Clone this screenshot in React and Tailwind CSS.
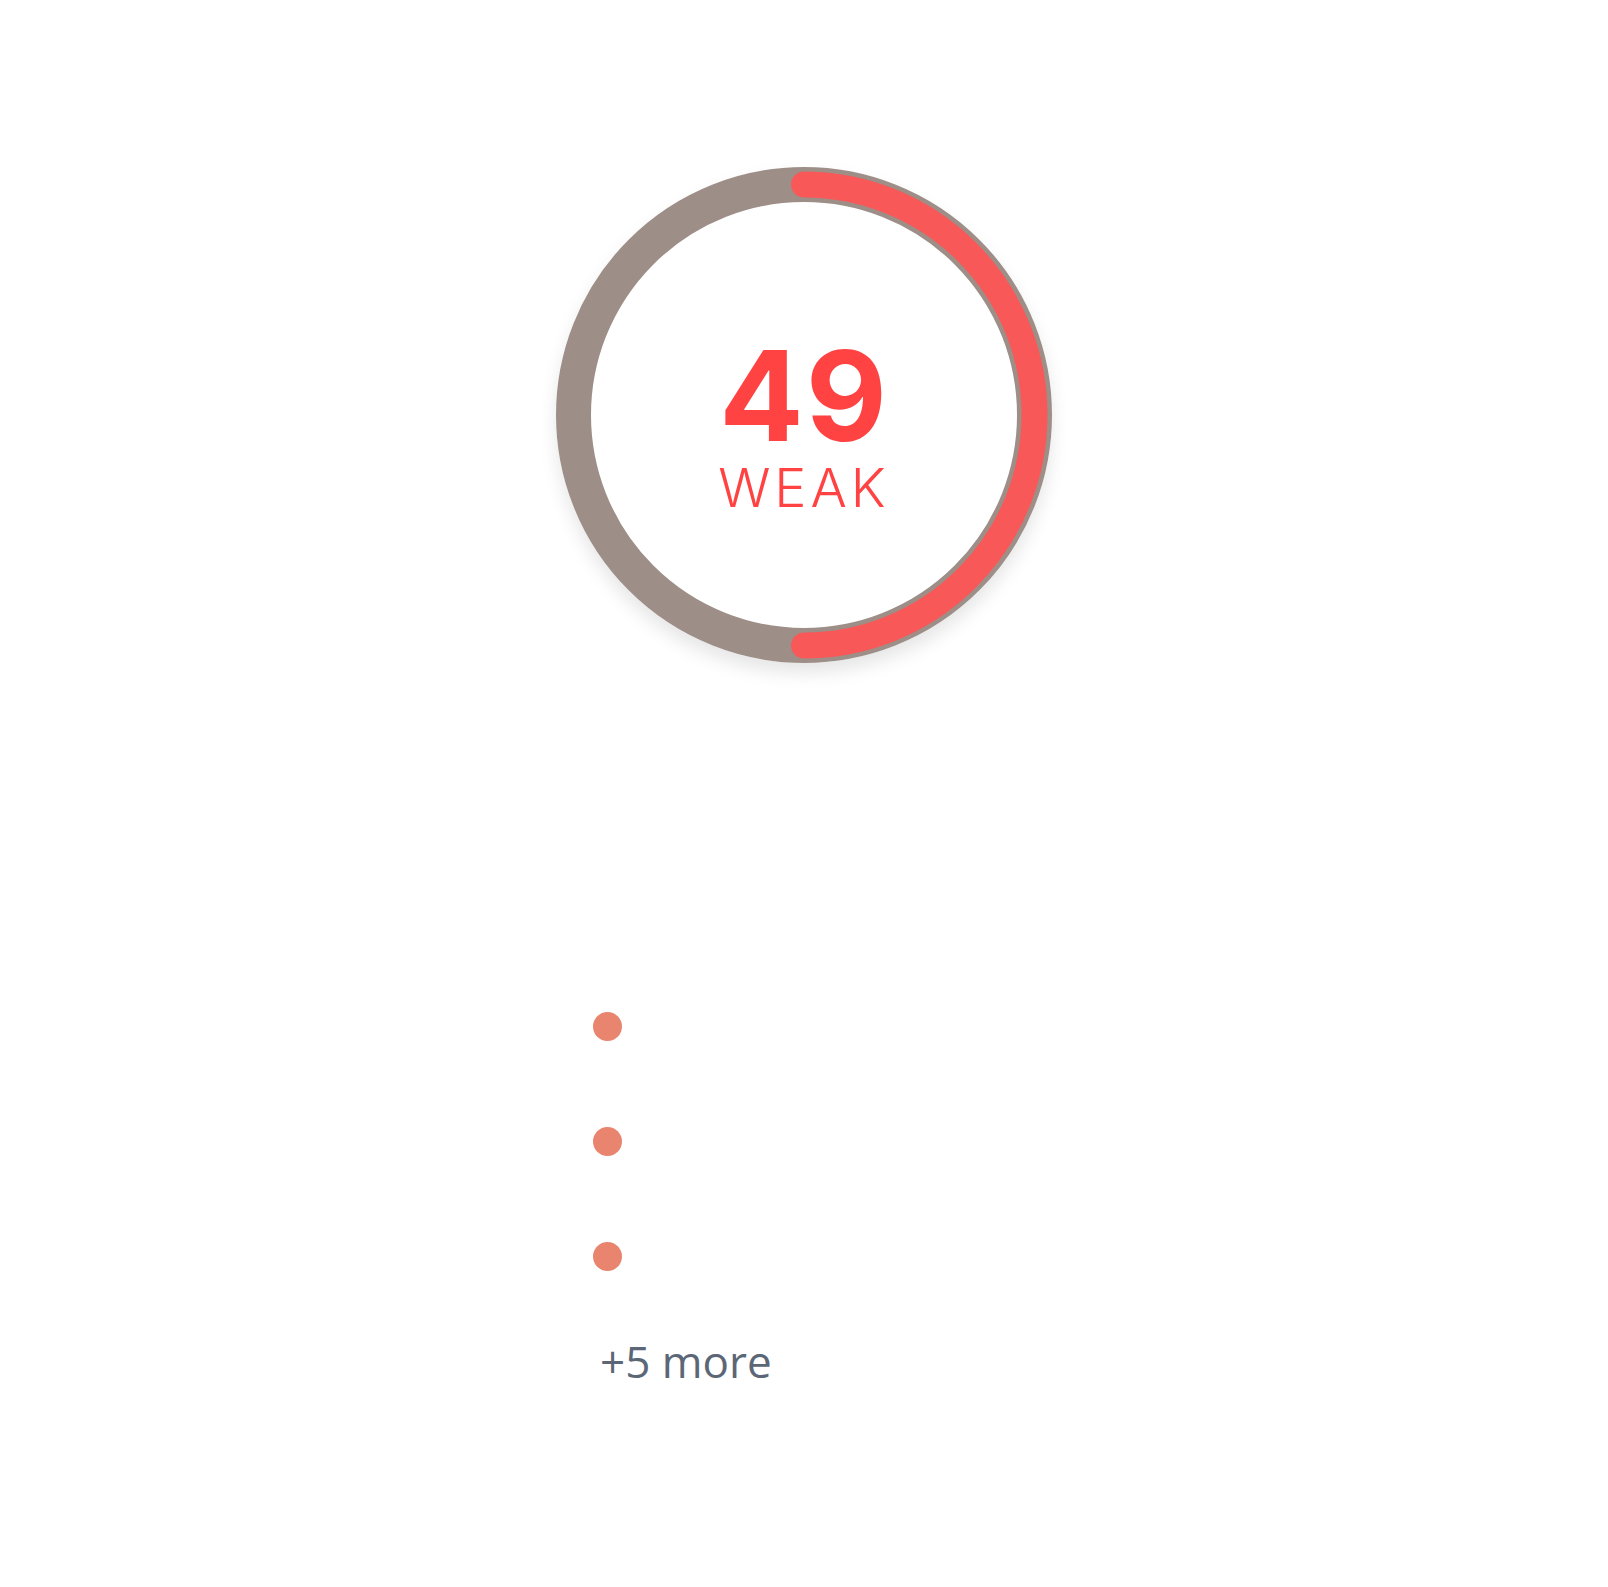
import React from "react";

const SCORE = 49;
const ITEMS = ["", "", ""];

function ScoreRing() {
  // ring drawn as svg, 496px box
  const r = 230.5;
  const c = 248;
  return (
    <div className="relative flex h-[496px] w-[496px] flex-col items-center justify-center rounded-full bg-white pt-[18px] shadow-[0_10px_18px_rgba(0,0,0,0.10)]">
      <svg
        className="absolute inset-0"
        width="496"
        height="496"
        viewBox="0 0 496 496"
        aria-hidden
      >
        <circle cx={c} cy={c} r={r} fill="none" stroke="#9d8f87" strokeWidth="35" />
        <path
          d={`M ${c} ${c - r} A ${r} ${r} 0 0 1 ${c} ${c + r}`}
          fill="none"
          stroke="#f85858"
          strokeWidth="26"
          strokeLinecap="round"
        />
      </svg>
      <div className="relative font-['Inter',sans-serif] text-[125px] font-bold leading-none tracking-[2px] text-[#ff4343]">
        {SCORE}
      </div>
      <div className="relative mt-[3px] font-['Inter',sans-serif] text-[54px] font-light leading-none tracking-[4px] text-[#ff4343]">
        WEAK
      </div>
    </div>
  );
}

export default function App() {
  return (
    <div className="flex min-h-screen w-full flex-col items-center bg-white pt-[167px]">
      <ScoreRing />

      {/* Issues list */}
      <div className="mt-[349px] w-[422px]">
        <ul className="flex flex-col gap-[86px]">
          {ITEMS.map((item, i) => (
            <li key={i} className="flex items-center gap-4">
              <span className="h-[29px] w-[29px] rounded-full bg-[#e9856f]" />
              <span>{item}</span>
            </li>
          ))}
        </ul>
        <div className="mt-[68px] pl-[7px] font-['Open_Sans',sans-serif] text-[44px] leading-none text-[#5b6776]">
          +5 more
        </div>
      </div>
    </div>
  );
}
